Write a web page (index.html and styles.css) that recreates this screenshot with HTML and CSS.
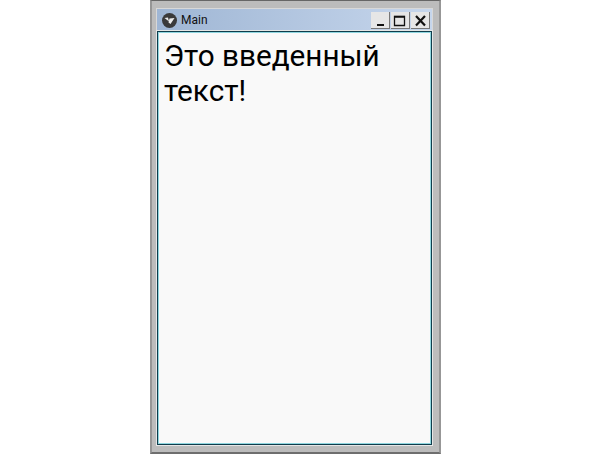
FILE: index.html
```html
<!DOCTYPE html>
<html lang="en">
<head>
    <meta charset="UTF-8">
    <title>Main</title>
    <link rel="stylesheet" href="styles.css">
</head>
<body>
    <div class="window">
        <div class="titlebar">
            <svg class="app-icon" width="15" height="15" viewBox="0 0 15 15">
                <circle cx="7.5" cy="7.5" r="7.5" fill="#3a3a3a"/>
                <path d="M2.5 5 L6 4.5 L7 8.5 Z M7.5 5.5 L12.5 5 L8.5 11 L6.5 9.5 Z" fill="#ececec"/>
            </svg>
            <span class="title">Main</span>
            <div class="controls">
                <div class="ctl-btn"><svg width="18" height="16" viewBox="0 0 18 16"><rect x="6" y="12" width="7" height="2" fill="#111"/></svg></div>
                <div class="ctl-btn"><svg width="18" height="16" viewBox="0 0 18 16"><path d="M3.5 4.5h10v9h-10z" fill="none" stroke="#111" stroke-width="1.3"/><path d="M3 4.8h11" stroke="#111" stroke-width="1.8"/></svg></div>
                <div class="ctl-btn"><svg width="18" height="16" viewBox="0 0 18 16"><path d="M5 4l9 9.5M14 4l-9 9.5" fill="none" stroke="#111" stroke-width="2.2"/></svg></div>
            </div>
        </div>
        <div class="content">
            <p class="typed">Это введенный текст!</p>
        </div>
    </div>
</body>
</html>
```

FILE: styles.css
```css
html, body {
    margin: 0;
    height: 100%;
    background: #fff;
}
body {
    padding-left: 150px;
    box-sizing: border-box;
    font-family: Roboto, sans-serif;
}
.window {
    box-sizing: border-box;
    width: 291px;
    height: 454px;
    padding: 8px 7px 7px 5px;
    background: #bcbcbc;
    border-top: 1px solid #666;
    border-bottom: 2px solid #6e6e6e;
    border-left: 2px solid #969696;
    border-right: 2px solid #979797;
    display: flex;
    flex-direction: column;
}
.titlebar {
    height: 22px;
    display: flex;
    align-items: center;
    padding-left: 5px;
    background: linear-gradient(to right, #9fb6d4, #c6d6ec);
    box-shadow: 0 0 0 1px #d8d8d8;
    flex-shrink: 0;
}
.app-icon {
    margin-right: 4px;
}
.title {
    font-size: 12px;
    color: #111;
}
.controls {
    margin-left: auto;
    display: flex;
    gap: 1px;
    margin-right: 2px;
}
.ctl-btn {
    width: 18px;
    height: 16px;
    background: #e6e6e6;
    border-right: 1px solid #777;
    border-bottom: 1px solid #777;
    display: flex;
}
.content {
    flex: 1;
    background: #f9f9f9;
    border: 1px solid #0f3d4c;
    box-shadow: inset 0 0 0 1px #8fd6df, 0 0 0 1px #e6e6e6;
    padding: 6px 6px;
}
.typed {
    margin: 0;
    font-size: 29.7px;
    line-height: 35px;
    color: #000;
}
```
